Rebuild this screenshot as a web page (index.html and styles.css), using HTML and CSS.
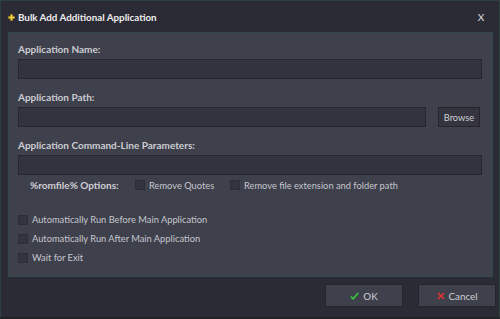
FILE: index.html
```html
<!DOCTYPE html>
<html lang="en">
<head>
    <meta charset="UTF-8">
    <title>Bulk Add Additional Application</title>
    <link rel="stylesheet" href="styles.css">
</head>
<body>
    <div class="window">
        <div class="titlebar">
            <svg class="title-icon" width="7" height="7" viewBox="0 0 7 7">
                <path d="M2.5 0.5h2v2h2v2h-2v2h-2v-2h-2v-2h2z" fill="#f4d84a" stroke="#b08a1c" stroke-width="0.6"/>
            </svg>
            <span class="title">Bulk Add Additional Application</span>
            <span class="close">X</span>
        </div>

        <div class="panel">
            <label class="field-label">Application Name:</label>
            <div class="input"></div>

            <label class="field-label">Application Path:</label>
            <div class="row">
                <div class="input grow"></div>
                <button class="btn small">Browse</button>
            </div>

            <label class="field-label">Application Command-Line Parameters:</label>
            <div class="input"></div>

            <div class="options">
                <span class="options-label">%romfile% Options:</span>
                <span class="check quotes"><span class="box"></span>Remove Quotes</span>
                <span class="check"><span class="box"></span>Remove file extension and folder path</span>
            </div>

            <div class="checks">
                <span class="check"><span class="box"></span>Automatically Run Before Main Application</span>
                <span class="check"><span class="box"></span>Automatically Run After Main Application</span>
                <span class="check"><span class="box"></span>Wait for Exit</span>
            </div>
        </div>

        <div class="footer">
            <button class="btn big">
                <svg width="9" height="8" viewBox="0 0 9 8"><path d="M1 4.5l2.2 2.3l5-5.8" fill="none" stroke="#3cc43c" stroke-width="1.7"/></svg>
                OK
            </button>
            <button class="btn big">
                <svg width="8" height="8" viewBox="0 0 8 8"><path d="M1 1l6 6M7 1l-6 6" fill="none" stroke="#e23434" stroke-width="1.6"/></svg>
                Cancel
            </button>
        </div>
    </div>
</body>
</html>
```

FILE: styles.css
```css
html, body {
    margin: 0;
    padding: 0;
    background-color: #22262a;
}
body {
    font-family: Lato, "Open Sans", sans-serif;
    font-size: 10px;
    color: #cfcfd4;
}
.window {
    width: 500px;
    height: 318px;
    box-sizing: border-box;
    border: 1px solid #2e403e;
    border-bottom-color: #1c2020;
    background-color: #2b2b35;
    display: flex;
    flex-direction: column;
}
.titlebar {
    height: 31px;
    flex: none;
    display: flex;
    align-items: center;
    padding: 0 0 0 7px;
}
.title-icon {
    margin-right: 3px;
    margin-top: 1px;
}
.title {
    font-weight: bold;
    font-size: 9.8px;
    color: #eeeeee;
    flex: 1;
}
.close {
    width: 10px;
    margin-right: 13px;
    text-align: center;
    font-size: 10px;
    color: #e0e0e0;
}
.panel {
    margin: 0 6px 0 7px;
    height: 245px;
    flex: none;
    box-sizing: border-box;
    background-color: #3e404c;
    border: 1px solid #2e4646;
    border-bottom-color: #364a4a;
    padding: 10px 10px 0 9px;
    display: flex;
    flex-direction: column;
}
.field-label {
    font-weight: bold;
    color: #cdcdd2;
    line-height: 12px;
    height: 12px;
    margin: 12px 0 4px 0;
    flex: none;
}
.field-label:first-child {
    margin-top: 0;
}
.input {
    height: 20px;
    flex: none;
    box-sizing: border-box;
    background-color: #32333f;
    border: 1px solid #26262e;
}
.row {
    display: flex;
    flex: none;
    gap: 12px;
    padding-right: 2px;
}
.grow {
    flex: 1;
}
.btn {
    font-family: inherit;
    color: #cfcfd4;
    background-color: #3e404c;
    border: 1px solid #25252c;
    font-size: 9.3px;
    padding: 0;
    display: flex;
    align-items: center;
    justify-content: center;
    gap: 4px;
}
.btn.small {
    width: 42px;
    height: 20px;
    background-color: #34353f;
}
.options {
    display: flex;
    flex: none;
    align-items: center;
    margin: 4px 0 0 12px;
    height: 12px;
}
.options-label {
    font-weight: bold;
    width: 105px;
    flex: none;
}
.check {
    display: flex;
    align-items: center;
    color: #c6c6cc;
    font-size: 9.3px;
    height: 19px;
    white-space: nowrap;
}
.check.quotes {
    width: 95px;
    flex: none;
}
.box {
    width: 10px;
    height: 10px;
    box-sizing: border-box;
    background-color: #33343f;
    border: 1px solid #2c2d37;
    margin-right: 4px;
    flex: none;
}
.checks {
    margin-top: 19px;
    display: flex;
    flex: none;
    flex-direction: column;
}
.footer {
    flex: 1;
    display: flex;
    justify-content: flex-end;
    align-items: flex-start;
    gap: 15px;
    padding: 7px 3px 0 0;
}
.btn.big {
    width: 78px;
    height: 23px;
    font-size: 9.8px;
}
```
